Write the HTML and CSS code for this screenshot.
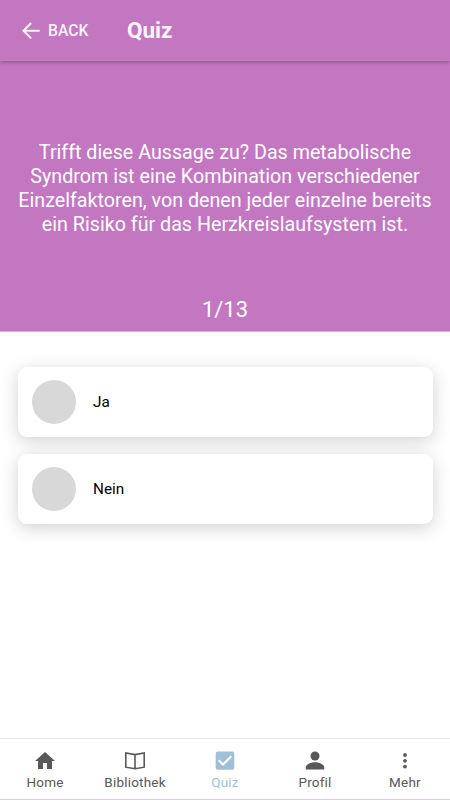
FILE: index.html
```html
<!DOCTYPE html>
<html lang="de">
<head>
    <meta charset="UTF-8">
    <meta name="viewport" content="width=device-width, initial-scale=1.0">
    <title>Quiz</title>
    <link rel="stylesheet" href="styles.css">
</head>
<body>
<header class="toolbar">
    <a class="back" href="#">
        <svg class="back-icon" viewBox="0 0 18 18"><path d="M9.2 1 1.5 8.7 9.2 16.4M1.5 8.7H17.7"/></svg>
        <span>BACK</span>
    </a>
    <h1>Quiz</h1>
</header>
<section class="question">
    <p class="question-text">Trifft diese Aussage zu? Das metabolische Syndrom ist eine Kombination verschiedener Einzelfaktoren, von denen jeder einzelne bereits ein Risiko für das Herzkreislaufsystem ist.</p>
    <span class="counter">1/13</span>
</section>
<main class="answers">
    <button class="answer"><span class="dot"></span>Ja</button>
    <button class="answer"><span class="dot"></span>Nein</button>
</main>
<nav class="tabs">
    <a class="tab" href="#">
        <svg viewBox="0 0 24 24"><path d="M10 20v-6h4v6h5v-8h3L12 3 2 12h3v8z"/></svg>
        <span>Home</span>
    </a>
    <a class="tab" href="#">
        <svg class="outline" viewBox="0 0 24 24"><path d="M12 5.6 2.8 4v14.2l9.2 1.6 9.2-1.6V4zM12 5.6v14.2"/></svg>
        <span>Bibliothek</span>
    </a>
    <a class="tab active" href="#">
        <svg viewBox="0 0 24 24"><path d="M19.3 2.5H4.7a2 2 0 0 0-2 2v14.3a2 2 0 0 0 2 2h14.6a2 2 0 0 0 2-2V4.5a2 2 0 0 0-2-2zM10 17l-5-5 1.5-1.5L10 14l7.6-7.6L19.1 7.9z"/></svg>
        <span>Quiz</span>
    </a>
    <a class="tab" href="#">
        <svg viewBox="0 0 24 24"><circle cx="12" cy="7" r="4.5"/><path d="M2.8 20.5v-2c0-3 5-5.2 9.2-5.2s9.2 2.2 9.2 5.2v2z"/></svg>
        <span>Profil</span>
    </a>
    <a class="tab" href="#">
        <svg viewBox="0 0 24 24"><circle cx="12" cy="6" r="1.9"/><circle cx="12" cy="11.8" r="1.9"/><circle cx="12" cy="17.6" r="1.9"/></svg>
        <span>Mehr</span>
    </a>
</nav>
</body>
</html>
```
FILE: styles.css
```css
:root {
    --primary: #c377c1;
    --active: #a0c0d8;
    --tab-color: #595959;
}
* {
    box-sizing: border-box;
}
body {
    margin: 0;
    height: 100vh;
    display: flex;
    flex-direction: column;
    font-family: Roboto, sans-serif;
    background: #fff;
    overflow: hidden;
}
a {
    color: inherit;
    text-decoration: none;
}
.toolbar {
    position: relative;
    height: 61px;
    flex: none;
    display: flex;
    align-items: center;
    padding-left: 22px;
    background: var(--primary);
    color: #f8f4f8;
    box-shadow: 0 1px 4px rgba(0, 0, 0, 0.3);
}
.back {
    display: flex;
    align-items: center;
    gap: 8px;
    width: 105px;
    font-size: 15.7px;
    line-height: 18px;
    font-weight: 500;
}
.back-icon {
    width: 18px;
    height: 18px;
    fill: none;
    stroke: currentColor;
    stroke-width: 2;
}
h1 {
    margin: 0;
    font-size: 22.5px;
    line-height: 25px;
    font-weight: 700;
}
.question {
    height: 271px;
    flex: none;
    display: flex;
    flex-direction: column;
    justify-content: space-between;
    align-items: center;
    padding: 80px 17px 7px;
    background: var(--primary);
    border-bottom: 1px solid #dcb0db;
    color: #fff;
}
.question-text {
    margin: 0;
    font-size: 19.7px;
    line-height: 24px;
    text-align: center;
}
.counter {
    font-size: 22px;
    line-height: 28px;
}
.answers {
    flex: 1;
    display: flex;
    flex-direction: column;
    gap: 17px;
    padding: 35px 17.5px 0;
}
.answer {
    height: 70px;
    display: flex;
    align-items: center;
    gap: 17.5px;
    padding: 0 14px;
    border: none;
    border-radius: 9px;
    background: #fff;
    color: #000;
    font-family: inherit;
    font-size: 15.3px;
    box-shadow: 0 4px 18px rgba(0, 0, 0, 0.18);
}
.dot {
    width: 44px;
    height: 44px;
    border-radius: 50%;
    background: #d8d8d8;
}
.tabs {
    height: 62px;
    flex: none;
    display: flex;
    border-top: 1px solid #e8e8e8;
    border-bottom: 1px solid #dfcbe0;
    background: #fff;
}
.tab {
    flex: 1;
    display: flex;
    flex-direction: column;
    align-items: center;
    padding-top: 10px;
    color: var(--tab-color);
    font-size: 13.5px;
    line-height: 18px;
    letter-spacing: 0.2px;
}
.tab svg {
    width: 24px;
    height: 24px;
    fill: currentColor;
}
.tab .outline {
    fill: none;
    stroke: currentColor;
    stroke-width: 1.6;
}
.tab.active {
    color: var(--active);
}
```
